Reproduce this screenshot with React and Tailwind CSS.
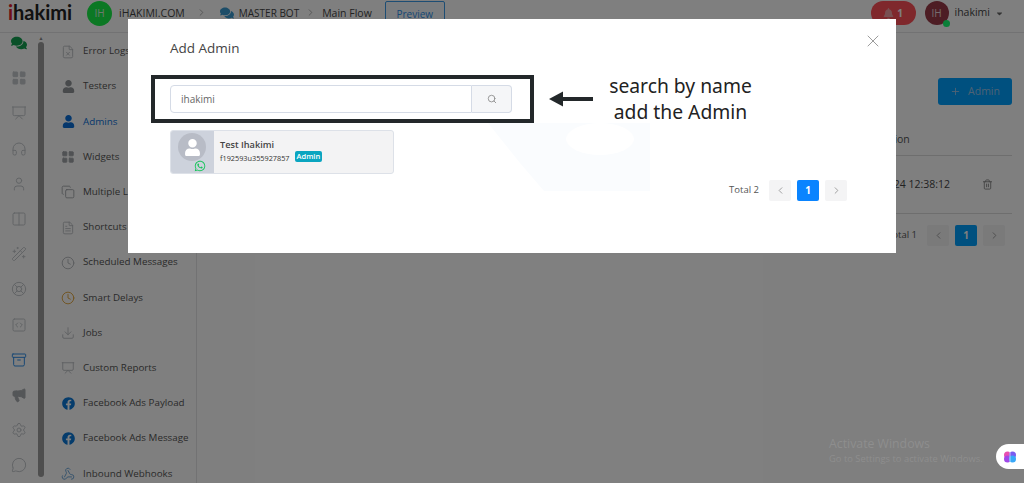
import {
    Archive, ChevronLeft, ChevronRight, Clock, Columns2, Copy, Download, FileText, FileX, Headphones,
    LayoutGrid, LifeBuoy, Megaphone, MessageCircle, Plus, Presentation, Search, Settings, SquareCode, Trash2,
    User, Wand2, Webhook, X,
} from 'lucide-react';
import { FaBell, FaCaretDown, FaComments, FaFacebook, FaUser, FaWhatsapp } from 'react-icons/fa';

const font = { fontFamily: '"Open Sans", "Noto Sans", sans-serif' };

const railIcons = [
    { icon: FaComments, className: 'text-[#12a150]' },
    { icon: LayoutGrid, className: 'text-[#c4c8cc] fill-[#c4c8cc]' },
    { icon: Presentation, className: 'text-[#c4c8cc]' },
    { icon: Headphones, className: 'text-[#c4c8cc]' },
    { icon: User, className: 'text-[#c4c8cc]' },
    { icon: Columns2, className: 'text-[#c4c8cc]' },
    { icon: Wand2, className: 'text-[#c4c8cc]' },
    { icon: LifeBuoy, className: 'text-[#c4c8cc]' },
    { icon: SquareCode, className: 'text-[#c4c8cc]' },
    { icon: Archive, className: 'text-[#2f8fe8]' },
    { icon: Megaphone, className: 'text-[#a8acb0] fill-[#a8acb0]' },
    { icon: Settings, className: 'text-[#c4c8cc]' },
    { icon: MessageCircle, className: 'text-[#c4c8cc]' },
];

const menuItems = [
    { label: 'Error Logs', icon: FileX, iconClass: 'text-[#b8bcc0]' },
    { label: 'Testers', icon: FaUser, iconClass: 'text-[#909498]', small: true },
    { label: 'Admins', icon: FaUser, iconClass: 'text-[#0a6fd8]', small: true, active: true },
    { label: 'Widgets', icon: LayoutGrid, iconClass: 'text-[#a0a4a8] fill-[#a0a4a8]' },
    { label: 'Multiple Languages', icon: Copy, iconClass: 'text-[#a0a4a8]' },
    { label: 'Shortcuts', icon: FileText, iconClass: 'text-[#b8bcc0]' },
    { label: 'Scheduled Messages', icon: Clock, iconClass: 'text-[#b0b4b8]' },
    { label: 'Smart Delays', icon: Clock, iconClass: 'text-[#e0a030]' },
    { label: 'Jobs', icon: Download, iconClass: 'text-[#b8bcc0]' },
    { label: 'Custom Reports', icon: Presentation, iconClass: 'text-[#b8bcc0]' },
    { label: 'Facebook Ads Payload', icon: FaFacebook, iconClass: 'text-[#0a78d8]', small: true },
    { label: 'Facebook Ads Message', icon: FaFacebook, iconClass: 'text-[#0a78d8]', small: true },
    { label: 'Inbound Webhooks', icon: Webhook, iconClass: 'text-[#5b9bd5]' },
];

const Pager = ({ total, activeClass, className }) => (
    <div className={`flex items-center ${className}`}>
        <span className="text-[9.5px] text-[#555] mr-[10px]">Total {total}</span>
        <button className="w-[22px] h-[21px] rounded-[2px] bg-[#f4f4f5] flex items-center justify-center text-[#999]">
            <ChevronLeft size={11} />
        </button>
        <button className={`w-[22px] h-[21px] mx-[6px] rounded-[2px] flex items-center justify-center text-white text-[10px] font-bold ${activeClass}`}>
            1
        </button>
        <button className="w-[22px] h-[21px] rounded-[2px] bg-[#f4f4f5] flex items-center justify-center text-[#999]">
            <ChevronRight size={11} />
        </button>
    </div>
);

const Header = () => (
    <header className="h-[33px] shrink-0 border-b border-[#e4e4e7] bg-white flex items-start pt-px text-[10.5px] text-[#444]">
        <div className="w-[87px] pl-[8px] text-[20px] leading-[22px] font-bold text-[#222]" style={{ fontFamily: 'Lato, sans-serif' }}>
            <span className="text-[#e0202c]">i</span>hakimi
        </div>
        <div className="w-[25px] h-[25px] rounded-full bg-[#18f048] text-[#d8f0dc] flex items-center justify-center text-[10px]">IH</div>
        <span className="ml-[7px] leading-[24px]">iHAKIMI.COM</span>
        <ChevronRight size={11} className="ml-[11px] mt-[6px] text-[#aaa]" />
        <FaComments size={14} className="ml-[13px] mt-[5px] text-[#3a9bd0]" />
        <span className="ml-[5px] leading-[24px] text-[10px]">MASTER BOT</span>
        <ChevronRight size={11} className="ml-[6px] mt-[6px] text-[#aaa]" />
        <span className="ml-[6px] leading-[24px] text-[10.5px]">Main Flow</span>
        <button className="ml-[13px] w-[60px] h-[26px] rounded-[2px] border border-[#3a9be8] text-[#2f8fe8] bg-[#f7fbff] text-[10px]">Preview</button>
        <div className="ml-auto flex items-start">
            <div className="w-[45px] h-[24px] rounded-full bg-[#ff5058] text-white flex items-center justify-center gap-[3px] text-[10px] font-bold">
                <FaBell size={11} className="text-[#f2a0a4]" />
                1
            </div>
            <div className="relative ml-[9px] w-[24px] h-[24px] rounded-full bg-[#9a3a48] text-[#e8d8da] flex items-center justify-center text-[10px]">
                IH
                <span className="absolute right-[-1px] bottom-[-2px] w-[7px] h-[7px] rounded-full bg-[#14ff70]" />
            </div>
            <span className="ml-[6px] leading-[23px] text-[10.5px]">ihakimi</span>
            <FaCaretDown size={9} className="ml-[5px] mt-[8px] mr-[20px] text-[#666]" />
        </div>
    </header>
);

const Sidebar = () => (
    <>
        <div className="w-[38px] shrink-0 flex flex-col items-center gap-[19.2px] pt-[2px]">
            {railIcons.map((item, i) => {
                const Icon = item.icon;
                return <Icon key={i} size={16} strokeWidth={1.5} className={`shrink-0 ${item.className}`} />;
            })}
        </div>
        <div className="w-[6px] shrink-0 flex flex-col items-center">
            <span className="mt-[2px] text-[5px] leading-[6px] text-[#888]">▲</span>
            <div className="mt-[1px] w-[6px] h-[435px] rounded-full bg-[#9c9c9c]" />
        </div>
        <nav className="w-[153px] shrink-0 border-r border-[#e4e4e7] bg-white overflow-hidden pt-px">
            {menuItems.map((item) => {
                const Icon = item.icon;
                return (
                    <div key={item.label} className="h-[35.2px] flex items-center pl-[17px] whitespace-nowrap">
                        <span className="w-[14px] flex justify-center mr-[8px]">
                            <Icon size={item.small ? 13 : 14} strokeWidth={1.5} className={item.iconClass} />
                        </span>
                        <span className={`text-[9.8px] ${item.active ? 'text-[#0a6fd8]' : 'text-[#555]'}`}>{item.label}</span>
                    </div>
                );
            })}
        </nav>
    </>
);

const MainContent = () => (
    <main className="flex-1 bg-white pt-[45px] pr-[12px] flex flex-col items-end text-[10.5px] text-[#555]">
        <button className="w-[74px] h-[27px] rounded-[3px] bg-[#00a0ff] text-[#9cc4e8] flex items-center justify-center gap-[7px] text-[10.5px]">
            <Plus size={11} />
            Admin
        </button>
        <div className="w-[300px] mt-[25px] border-b border-[#ddd] h-[26px] pl-[156px] pt-px leading-[17px]">Creation</div>
        <div className="w-[300px] h-[58px] border-b border-[#ddd] flex items-center justify-end pr-[19px]">
            <span className="mr-[32px] text-[#444] pt-px">2024-01-24 12:38:12</span>
            <Trash2 size={11} className="text-[#888]" />
        </div>
        <Pager total={1} activeClass="bg-[#00a0ff]" className="mt-[11px] mr-[7px]" />
    </main>
);

const AddAdminModal = () => (
    <div className="absolute left-[128px] top-[19px] w-[768px] h-[234px] bg-white overflow-hidden">
        {/* faint shape left over in the pasted screenshot */}
        <svg className="absolute left-[360px] top-[104px]" width="162" height="68" viewBox="0 0 162 68">
            <path d="M0 0H162V68H56L32 40Z" fill="#fafcfe" />
            <ellipse cx="112" cy="16" rx="34" ry="16" fill="#ffffff" />
        </svg>
        <X size={20} strokeWidth={1} className="absolute right-[13px] top-[12px] text-[#888]" />
        <h2 className="pl-[42px] pt-[20px] text-[13.5px] leading-[19px] text-[#444]">Add Admin</h2>
        <div className="relative flex items-center mt-[15px] ml-[23px]">
            <div className="w-[383px] h-[48px] border-[4px] border-[#23282a] pl-[15px] pt-[6px]">
                <div className="flex w-[342px] h-[28px]">
                    <div className="flex-1 border border-[#d5dbe6] rounded-l-[4px] pl-[10px] text-[10px] leading-[26px] text-[#666]">ihakimi</div>
                    <div className="w-[40px] border border-l-0 border-[#d5dbe6] rounded-r-[4px] bg-[#f5f6f8] flex items-center justify-center">
                        <Search size={10} className="text-[#888]" />
                    </div>
                </div>
            </div>
            <svg className="ml-[15px]" width="45" height="16" viewBox="0 0 45 16">
                <path d="M0 8L14 0.5V6H44V10H14V15.5Z" fill="#23282a" />
            </svg>
            <div className="ml-[13px] w-[147px] text-center text-[19.3px] leading-[26px] text-[#222]" style={{ fontFamily: '"Noto Sans", sans-serif' }}>
                search by name
                <br />
                add the Admin
            </div>
        </div>
        <div className="relative flex mt-[5px] ml-[42px] w-[224px] h-[44px] border border-[#dde1e8] rounded-[3px] bg-[#f3f3f4] overflow-hidden">
            <div className="relative w-[43px] bg-[#cdd2dc] shrink-0 pl-[7px] pt-[2px]">
                <div className="w-[28px] h-[28px] rounded-full bg-[#b8bcc6] flex items-center justify-center text-white">
                    <FaUser size={17} />
                </div>
                <FaWhatsapp size={12} className="absolute left-[23px] top-[29px] text-[#18c45c]" />
            </div>
            <div className="pl-[6px] pt-[7px]">
                <div className="text-[9.2px] leading-[13px] font-semibold text-[#444]">Test Ihakimi</div>
                <div className="flex items-center gap-[5px] mt-[1px]">
                    <span className="text-[7.3px] leading-[13px] text-[#333]">f192593u355927857</span>
                    <span className="px-[2px] rounded-[2px] bg-[#0aa5c0] text-white text-[7.5px] leading-[11px] font-semibold -mt-[4px]">Admin</span>
                </div>
            </div>
        </div>
        <Pager total={2} activeClass="bg-[#0a84ff]" className="relative justify-end mt-[6px] mr-[49px]" />
    </div>
);

const App = () => (
    <div className="relative w-[1024px] h-[483px] overflow-hidden bg-white flex flex-col" style={font}>
        <Header />
        <div className="flex flex-1 min-h-0">
            <Sidebar />
            <MainContent />
        </div>
        {/* dark backdrop */}
        <div className="absolute inset-0 bg-black/50" />
        <AddAdminModal />
        <div className="absolute left-[829px] top-[436px] text-[#8e8e8e]">
            <div className="text-[12.3px] leading-[16px]">Activate Windows</div>
            <div className="text-[9.4px] leading-[14px]">Go to Settings to activate Windows.</div>
        </div>
        <div className="absolute right-0 top-[444px] w-[28px] h-[25px] rounded-l-full bg-white flex items-center pl-[7px]">
            <svg width="14" height="14" viewBox="0 0 14 14">
                <circle cx="4.5" cy="5" r="3.5" fill="#e84fb0" />
                <circle cx="4.5" cy="9" r="3.5" fill="#a048e8" />
                <circle cx="9.5" cy="5" r="3.5" fill="#7a5cf0" />
                <circle cx="9.5" cy="9" r="3.5" fill="#38a8f8" />
                <path d="M7 1V13" stroke="#ffffff" strokeWidth="0.6" />
            </svg>
        </div>
    </div>
);

export default App;
